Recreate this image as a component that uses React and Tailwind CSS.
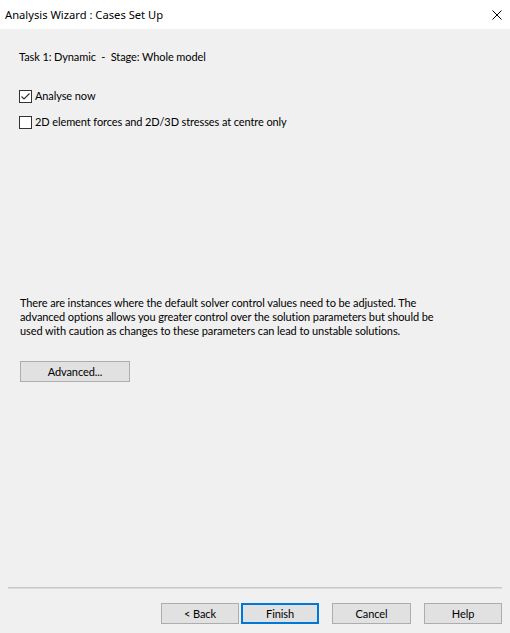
export default function App() {
  const body = { fontFamily: 'Lato, "Noto Sans", sans-serif' };
  const title = { fontFamily: '"Noto Sans", sans-serif' };

  return (
    <div
      className="w-[510px] h-[633px] bg-[#f0f0f0] flex flex-col text-[11px] tracking-[-0.1px] text-black"
      style={body}
    >
      {/* title bar */}
      <div className="h-[29px] bg-white flex items-center justify-between pl-[5px] pr-[8px] shrink-0">
        <span className="leading-4 text-[11.2px] tracking-normal" style={title}>
          Analysis Wizard : Cases Set Up
        </span>
        <svg width="10" height="10" viewBox="0 0 10 10">
          <path d="M0.5 0.5 L9.5 9.5 M9.5 0.5 L0.5 9.5" stroke="#000" strokeWidth="1" />
        </svg>
      </div>

      {/* body */}
      <div className="flex-1 px-[19px]">
        <p className="mt-[20px] leading-4">Task 1: Dynamic &nbsp;- &nbsp;Stage: Whole model</p>

        <label className="mt-[23px] h-4 flex items-center gap-[3px]">
          <span className="w-[13px] h-[13px] border border-[#333] bg-white flex items-center justify-center">
            <svg width="11" height="11" viewBox="0 0 11 11">
              <path d="M1.5 5.5 L4 8 L9.5 2.5" fill="none" stroke="#333" strokeWidth="1.2" />
            </svg>
          </span>
          <span>Analyse now</span>
        </label>

        <label className="mt-[10px] h-4 flex items-center gap-[3px]">
          <span className="w-[13px] h-[13px] border border-[#333] bg-white" />
          <span>2D element forces and 2D/3D stresses at centre only</span>
        </label>

        <p className="mt-[166px] leading-[14px] pl-px whitespace-nowrap">
          There are instances where the default solver control values need to be adjusted. The
          <br />
          advanced options allows you greater control over the solution parameters but should be
          <br />
          used with caution as changes to these parameters can lead to unstable solutions.
        </p>

        <button className="mt-[23px] ml-px w-[110px] h-[21px] bg-[#e1e1e1] border border-[#adadad] leading-4">
          Advanced...
        </button>
      </div>

      {/* footer */}
      <div className="shrink-0 h-[46px]">
        <div className="mx-[8px] h-[2px] border-t border-[#c8c8c8] bg-[#dcdcdc]" />
        <div className="mt-[14px] flex justify-end pr-[8px]">
          <button className="w-[78px] h-[21px] bg-[#e1e1e1] border border-[#adadad] leading-4">
            &lt; Back
          </button>
          <button className="ml-[2px] w-[78px] h-[21px] bg-[#e1e1e1] border-2 border-[#0078d7] leading-4">
            Finish
          </button>
          <button className="ml-[13px] w-[79px] h-[21px] bg-[#e1e1e1] border border-[#adadad] leading-4">
            Cancel
          </button>
          <button className="ml-[13px] w-[78px] h-[21px] bg-[#e1e1e1] border border-[#adadad] leading-4">
            Help
          </button>
        </div>
      </div>
    </div>
  );
}
